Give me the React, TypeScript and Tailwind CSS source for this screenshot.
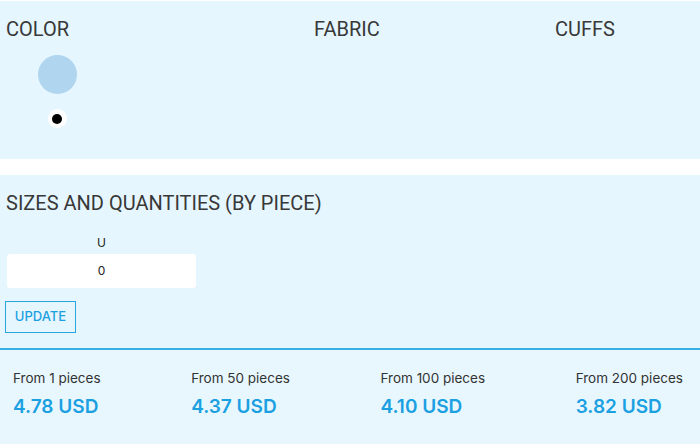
import React from "react";

const tiers = [
  { from: "From 1 pieces", price: "4.78 USD" },
  { from: "From 50 pieces", price: "4.37 USD" },
  { from: "From 100 pieces", price: "4.10 USD" },
  { from: "From 200 pieces", price: "3.82 USD" },
];

export default function App() {
  return (
    <div className="w-[700px] h-[444px] bg-white pt-px overflow-hidden" style={{ fontFamily: "Roboto, 'Noto Sans', sans-serif" }}>
      {/* Options panel */}
      <div className="h-[158px] bg-[#e5f6fe] flex">
        <div className="w-[308px] pl-[6px] pt-[16px] flex flex-col">
          <div className="text-[20px] leading-[24px] text-[#383838]">COLOR</div>
          <div className="flex flex-col items-center w-[102px] mt-[14px]">
            <div className="w-[39px] h-[39px] rounded-full bg-[#b0d5ef]" />
            <div className="mt-[15px] w-[19px] h-[19px] rounded-full bg-white flex items-center justify-center">
              <div className="w-[10px] h-[10px] rounded-full bg-black" />
            </div>
          </div>
        </div>
        <div className="w-[241px] pl-[6px] pt-[16px]">
          <div className="text-[20px] leading-[24px] text-[#383838]">FABRIC</div>
        </div>
        <div className="flex-1 pl-[6px] pt-[16px]">
          <div className="text-[20px] leading-[24px] text-[#383838]">CUFFS</div>
        </div>
      </div>

      <div className="h-[16px] bg-white" />

      {/* Sizes panel */}
      <div className="h-[173px] bg-[#e5f6fe] pt-[16px] flex flex-col">
        <div className="pl-[6px] text-[20px] leading-[24px] text-[#383838]">SIZES AND QUANTITIES (BY PIECE)</div>
        <div className="ml-[7px] w-[189px] mt-[21px] flex flex-col items-center">
          <div className="text-[12px] leading-[14px] text-[#222]" style={{ fontFamily: "Inter, sans-serif" }}>U</div>
          <div className="mt-[4px] w-full h-[34px] bg-white rounded-[3px] flex items-center justify-center text-[12px] text-[#222]" style={{ fontFamily: "Inter, sans-serif" }}>0</div>
        </div>
        <div className="ml-[5px] mt-[13px] w-[71px] h-[32px] border border-[#2aa6de] flex items-center justify-center text-[13px] text-[#1ba0e0] font-medium" style={{ fontFamily: "Inter, sans-serif" }}>
          UPDATE
        </div>
      </div>

      <div className="h-[2px] bg-[#36b0e3]" />

      {/* Price tiers */}
      <div className="h-[94px] bg-[#e8f7fe] flex justify-between pl-[13px] pr-[17px] pt-[20px]" style={{ fontFamily: "Inter, sans-serif" }}>
        {tiers.map((t) => (
          <div key={t.from} className="flex flex-col">
            <div className="text-[13.5px] leading-[17px] text-[#333]">{t.from}</div>
            <div className="mt-[8px] text-[19px] leading-[23px] font-semibold text-[#1ba0e2]">{t.price}</div>
          </div>
        ))}
      </div>
    </div>
  );
}
